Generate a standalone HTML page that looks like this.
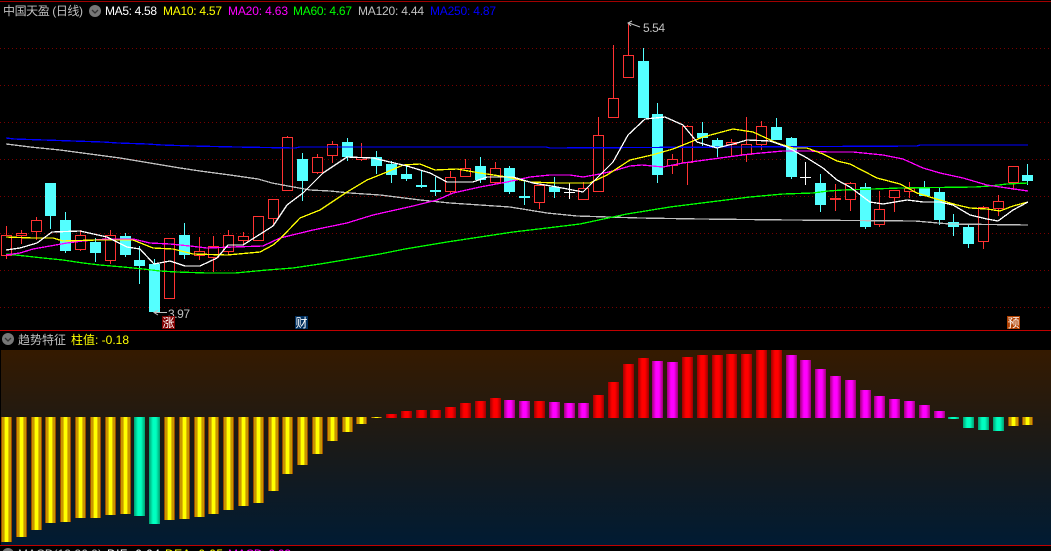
<!DOCTYPE html>
<html><head><meta charset="utf-8"><style>
html,body{margin:0;padding:0;background:#000;width:1051px;height:551px;overflow:hidden}
svg{display:block;font-family:"Liberation Sans","WenQuanYi Zen Hei","Noto Sans CJK SC",sans-serif;font-size:12px}
.k{shape-rendering:crispEdges}
.r{fill:#000;stroke:#ff3232;stroke-width:1;width:10px}
.c{fill:#54ffff;width:11px}
.m{fill:none;shape-rendering:crispEdges;stroke-width:1.3}
.y{fill:url(#gy);width:11px}.d{fill:url(#gr);width:11px}.p{fill:url(#gp);width:11px}.g{fill:url(#gg);width:11px}
</style></head><body>
<svg width="1051" height="551" viewBox="0 0 1051 551" xmlns="http://www.w3.org/2000/svg">
<defs>
<linearGradient id="bg" x1="0" y1="0" x2="0" y2="1"><stop offset="0" stop-color="#351a00"/><stop offset=".5" stop-color="#1a1a18"/><stop offset="1" stop-color="#001b33"/></linearGradient>
<linearGradient id="gy"><stop offset="0" stop-color="#9a4a00"/><stop offset=".09" stop-color="#9a4a00"/><stop offset=".09" stop-color="#c89600"/><stop offset=".27" stop-color="#c89600"/><stop offset=".27" stop-color="#e0c000"/><stop offset=".36" stop-color="#e0c000"/><stop offset=".36" stop-color="#ffff00"/><stop offset=".64" stop-color="#ffff00"/><stop offset=".64" stop-color="#e0c000"/><stop offset=".73" stop-color="#e0c000"/><stop offset=".73" stop-color="#c89600"/><stop offset=".91" stop-color="#c89600"/><stop offset=".91" stop-color="#9a4a00"/><stop offset="1" stop-color="#9a4a00"/></linearGradient>
<linearGradient id="gr"><stop offset="0" stop-color="#a00000"/><stop offset=".36" stop-color="#ff0000"/><stop offset=".64" stop-color="#ff0000"/><stop offset="1" stop-color="#a00000"/></linearGradient>
<linearGradient id="gp"><stop offset="0" stop-color="#a00078"/><stop offset=".36" stop-color="#ff00ff"/><stop offset=".64" stop-color="#ff00ff"/><stop offset="1" stop-color="#a00078"/></linearGradient>
<linearGradient id="gg"><stop offset="0" stop-color="#00a070"/><stop offset=".36" stop-color="#00ffc0"/><stop offset=".64" stop-color="#00ffc0"/><stop offset="1" stop-color="#00a070"/></linearGradient>
</defs>
<rect width="1051" height="551" fill="#000"/>
<path d="M0 1.5H1051" stroke="#a00000" fill="none"/>
<path d="M0 48.5H1051M0 85.5H1051M0 122.5H1051M0 159.5H1051M0 196.5H1051M0 233.5H1051M0 270.5H1051M0 307.5H1051" stroke="#780000" stroke-dasharray="1 3" fill="none"/>

<g>
<path fill="none" stroke="#ff3232" d="M6.5 226V259M21.5 230V244M36.5 217V240M80.5 230V251M110.5 230V264M169.5 238V299M199.5 237V260M213.5 236V272M228.5 230V255M243.5 232V245M258.5 216V241M273.5 199V226M287.5 136V191M317.5 154V174M332.5 141V163M361.5 143V161M450.5 171V194M465.5 159V176M495.5 162V184M539.5 185V209M583.5 182V199M598.5 117V192M613.5 45V118M628.5 23V55M672.5 154V174M687.5 125V185M731.5 139V156M746.5 117V162M761.5 121V150M835.5 184V211M850.5 182V211M879.5 191V227M894.5 190V212M909.5 182V198M983.5 206V249M998.5 195V216M1013.5 166V190"/>
<path fill="none" stroke="#54ffff" d="M50.5 183V229M65.5 212V253M95.5 238V262M125.5 233V257M139.5 246V284M154.5 259V312M184.5 223V259M302.5 153V201M347.5 138V161M376.5 151V174M391.5 161V183M406.5 166V181M421.5 170V188M435.5 177V196M480.5 157V183M509.5 166V194M524.5 180V205M554.5 177V198M643.5 48V118M657.5 103V183M702.5 122V146M717.5 138V157M776.5 118V140M791.5 137V179M820.5 174V212M865.5 183V229M924.5 181V196M939.5 187V225M953.5 214V236M968.5 225V248M1027.5 164V185"/>
<path fill="none" stroke="#fff" d="M569.5 183V199M564 192.5H575M805.5 162V185M800 177.5H811"/>
<rect class="r" x="1.5" y="235.5" height="20"/><rect class="r" x="16.5" y="233.5" height="2"/><rect class="r" x="31.5" y="220.5" height="11"/><rect class="r" x="75.5" y="235.5" height="14"/><rect class="r" x="105.5" y="235.5" height="25"/><rect class="r" x="164.5" y="238.5" height="60"/><rect class="r" x="194.5" y="251.5" height="4"/><rect class="r" x="208.5" y="246.5" height="11"/><rect class="r" x="223.5" y="235.5" height="16"/><rect class="r" x="238.5" y="236.5" height="4"/><rect class="r" x="253.5" y="216.5" height="24"/><rect class="r" x="268.5" y="199.5" height="19"/><rect class="r" x="282.5" y="137.5" height="53"/><rect class="r" x="312.5" y="157.5" height="15"/><rect class="r" x="327.5" y="144.5" height="11"/><rect class="r" x="356.5" y="157.5" height="2"/><rect class="r" x="445.5" y="177.5" height="14"/><rect class="r" x="460.5" y="168.5" height="8"/><rect class="r" x="490.5" y="168.5" height="14"/><rect class="r" x="534.5" y="185.5" height="17"/><rect class="r" x="578.5" y="188.5" height="11"/><rect class="r" x="593.5" y="135.5" height="56"/><rect class="r" x="608.5" y="98.5" height="19"/><rect class="r" x="623.5" y="55.5" height="22"/><rect class="r" x="667.5" y="159.5" height="6"/><rect class="r" x="682.5" y="126.5" height="36"/><rect class="r" x="726.5" y="142.5" height="2"/><rect class="r" x="741.5" y="144.5" height="10"/><rect class="r" x="756.5" y="126.5" height="18"/><rect x="830" y="198" width="11" height="2" fill="#ff3232"/><rect class="r" x="845.5" y="183.5" height="16"/><rect class="r" x="874.5" y="209.5" height="15"/><rect class="r" x="889.5" y="190.5" height="7"/><rect class="r" x="904.5" y="188.5" height="3"/><rect class="r" x="978.5" y="207.5" height="34"/><rect class="r" x="993.5" y="201.5" height="7"/><rect class="r" x="1008.5" y="166.5" height="16"/>
<rect class="c" x="45" y="183" height="33"/><rect class="c" x="60" y="220" height="31"/><rect class="c" x="90" y="242" height="11"/><rect class="c" x="120" y="236" height="19"/><rect class="c" x="134" y="260" height="6"/><rect class="c" x="149" y="264" height="48"/><rect class="c" x="179" y="235" height="20"/><rect class="c" x="297" y="159" height="22"/><rect class="c" x="342" y="142" height="15"/><rect class="c" x="371" y="157" height="9"/><rect class="c" x="386" y="164" height="11"/><rect class="c" x="401" y="174" height="5"/><rect class="c" x="416" y="185" height="2"/><rect class="c" x="430" y="190" height="2"/><rect class="c" x="475" y="166" height="14"/><rect class="c" x="504" y="168" height="24"/><rect class="c" x="519" y="196" height="2"/><rect class="c" x="549" y="187" height="5"/><rect class="c" x="638" y="61" height="57"/><rect class="c" x="652" y="114" height="61"/><rect class="c" x="697" y="133" height="5"/><rect class="c" x="712" y="140" height="7"/><rect class="c" x="771" y="127" height="13"/><rect class="c" x="786" y="138" height="39"/><rect class="c" x="815" y="183" height="22"/><rect class="c" x="860" y="187" height="40"/><rect class="c" x="919" y="187" height="9"/><rect class="c" x="934" y="192" height="28"/><rect class="c" x="948" y="222" height="5"/><rect class="c" x="963" y="227" height="17"/><rect class="c" x="1022" y="175" height="6"/>
</g>

<polyline class="m" stroke="#c0c0c0" points="6,144 30,147 60,150 90,154 120,158 150,163 180,168 200,171 230,175 258,179 272,183 288,186 310,190 330,191 350,193 380,195 420,200 450,203 480,205 510,207 547,213 577,216 640,218 700,219 790,220 915,221 950,224 1028,225"/>
<polyline class="m" stroke="#0000ff" points="6,138 14,139 44,140 73,141 103,142 118,143 147,144 162,145 192,146 236,147 295,148 300,147 546,147 550,148 917,146 920,145 1028,145"/>
<polyline class="m" stroke="#00ff00" points="6,254 25,256 43,258 63,260 83,263 100,265 123,267 143,269 160,271 177,272 207,273 235,273 267,270 293,268 320,264 350,259 380,254 405,249 447,242 480,237 513,232 547,228 580,224 627,214 670,207 710,202 750,197 783,194 813,193 828,191 843,190 873,189 900,188 975,187 990,186 1007,184 1028,183"/>
<polyline class="m" stroke="#ff00ff" points="6,255 20,253 33,249 50,246 67,243 83,241 107,239 133,239 150,243 170,244 190,246 207,248 233,247 263,246 280,238 313,230 347,223 373,215 413,206 437,200 453,193 480,187 507,182 530,177 550,175 570,175 583,177 600,174 613,171 630,166 642,165 663,167 683,163 720,158 750,154 783,151 810,151 828,152 853,152 883,155 903,159 923,168 940,173 963,178 987,185 1007,188 1028,191"/>
<polyline class="m" stroke="#ffff00" points="6,237 33,238 53,238 63,241 97,240 133,240 153,248 173,249 193,254 227,255 260,252 273,245 280,239 300,218 320,210 347,192 367,180 387,172 403,165 420,164 435,170 457,169 480,173 507,177 530,182 557,183 590,183 607,175 630,160 652,155 673,149 703,137 733,129 753,132 777,143 793,148 807,148 823,154 837,161 850,164 877,178 900,184 917,193 933,198 957,205 970,208 987,209 1000,211 1013,206 1028,202"/>
<polyline class="m" stroke="#ffffff" points="6,250 20,248 37,243 52,232 80,231 107,237 127,247 140,249 154,264 170,261 185,266 200,266 217,258 228,245 243,245 273,226 287,205 303,193 323,173 347,157 373,158 390,162 407,166 430,173 447,182 473,182 487,177 513,177 533,183 557,187 583,192 600,175 613,162 628,135 645,119 665,117 683,125 697,142 717,148 737,143 747,140 770,141 787,147 807,158 823,168 837,180 850,187 870,202 883,204 907,200 923,202 940,202 953,205 970,215 987,219 998,221 1013,210 1028,202"/>

<circle cx="95" cy="11" r="6" fill="#777"/><path d="M92 10l3 3 3-3" stroke="#333" fill="none" stroke-width="1.3"/>
<text x="3" y="15" fill="#c0c0c0" textLength="80">中国天盈 (日线)</text>
<text x="105" y="15" fill="#fff" textLength="52">MA5: 4.58</text>
<text x="163" y="15" fill="#ff0" textLength="59">MA10: 4.57</text>
<text x="228" y="15" fill="#f0f" textLength="60">MA20: 4.63</text>
<text x="293" y="15" fill="#0f0" textLength="59">MA60: 4.67</text>
<text x="358" y="15" fill="#c0c0c0" textLength="66">MA120: 4.44</text>
<text x="430" y="15" fill="#0000ff" textLength="66">MA250: 4.87</text>

<text x="643" y="32" fill="#c0c0c0" textLength="22">5.54</text>
<path d="M640 27L629 23M632 21L628 23L631 26" stroke="#c0c0c0" fill="none"/>
<text x="168" y="318" fill="#c0c0c0" textLength="22">3.97</text>
<path d="M167 312.5H155M158 310L154 312.5L158 315" stroke="#c0c0c0" fill="none"/>

<rect x="162" y="316" width="13" height="13" fill="#800000"/><text x="162.5" y="327" fill="#fff" font-size="12" textLength="12">涨</text>
<rect x="295" y="316" width="13" height="13" fill="#003060"/><text x="295.5" y="327" fill="#fff" font-size="12" textLength="12">财</text>
<rect x="1007" y="316" width="13" height="13" fill="#b04000"/><text x="1007.5" y="327" fill="#fff" font-size="12" textLength="12">预</text>

<path d="M0 330.5H1051" stroke="#c00000" fill="none"/>
<circle cx="8" cy="339" r="6" fill="#777"/><path d="M5 338l3 3 3-3" stroke="#333" fill="none" stroke-width="1.3"/>
<text x="18" y="344" fill="#c0c0c0" textLength="48">趋势特征</text>
<text x="71" y="344" fill="#ff0" textLength="58">柱值: -0.18</text>

<rect x="1" y="350" width="1050" height="195" fill="url(#bg)"/>
<g class="k">
<rect class="y" x="1" y="417" height="125"/><rect class="y" x="16" y="417" height="120"/><rect class="y" x="31" y="417" height="113"/><rect class="y" x="45" y="417" height="106"/><rect class="y" x="60" y="417" height="105"/><rect class="y" x="75" y="417" height="101"/><rect class="y" x="90" y="417" height="101"/><rect class="y" x="105" y="417" height="98"/><rect class="y" x="120" y="417" height="97"/><rect class="g" x="134" y="417" height="99"/><rect class="g" x="149" y="417" height="107"/><rect class="y" x="164" y="417" height="103"/><rect class="y" x="179" y="417" height="102"/><rect class="y" x="194" y="417" height="100"/><rect class="y" x="208" y="417" height="97"/><rect class="y" x="223" y="417" height="93"/><rect class="y" x="238" y="417" height="89"/><rect class="y" x="253" y="417" height="86"/><rect class="y" x="268" y="417" height="74"/><rect class="y" x="282" y="417" height="57"/><rect class="y" x="297" y="417" height="48"/><rect class="y" x="312" y="417" height="37"/><rect class="y" x="327" y="417" height="24"/><rect class="y" x="342" y="417" height="15"/><rect class="y" x="356" y="417" height="7"/><rect class="y" x="371" y="417" height="1"/>
<rect class="d" x="386" y="414" height="4"/><rect class="d" x="401" y="411" height="7"/><rect class="d" x="416" y="410" height="8"/><rect class="d" x="430" y="410" height="8"/><rect class="d" x="445" y="407" height="11"/><rect class="d" x="460" y="403" height="15"/><rect class="d" x="475" y="401" height="17"/><rect class="d" x="490" y="398" height="20"/><rect class="p" x="504" y="400" height="18"/><rect class="p" x="519" y="401" height="17"/><rect class="d" x="534" y="401" height="17"/><rect class="p" x="549" y="402" height="16"/><rect class="p" x="564" y="403" height="15"/><rect class="p" x="578" y="403" height="15"/><rect class="d" x="593" y="395" height="23"/><rect class="d" x="608" y="382" height="36"/><rect class="d" x="623" y="364" height="54"/><rect class="d" x="638" y="358" height="60"/><rect class="p" x="652" y="361" height="57"/><rect class="p" x="667" y="362" height="56"/><rect class="d" x="682" y="357" height="61"/><rect class="d" x="697" y="355" height="63"/><rect class="d" x="712" y="355" height="63"/><rect class="d" x="726" y="354" height="64"/><rect class="d" x="741" y="354" height="64"/><rect class="d" x="756" y="350" height="68"/><rect class="d" x="771" y="350" height="68"/><rect class="p" x="786" y="355" height="63"/><rect class="p" x="800" y="360" height="58"/><rect class="p" x="815" y="369" height="49"/><rect class="p" x="830" y="376" height="42"/><rect class="p" x="845" y="380" height="38"/><rect class="p" x="860" y="390" height="28"/><rect class="p" x="874" y="396" height="22"/><rect class="p" x="889" y="399" height="19"/><rect class="p" x="904" y="401" height="17"/><rect class="p" x="919" y="405" height="13"/><rect class="p" x="934" y="411" height="7"/>
<rect class="g" x="948" y="417" height="2"/><rect class="g" x="963" y="417" height="11"/><rect class="g" x="978" y="417" height="13"/><rect class="g" x="993" y="417" height="14"/><rect class="y" x="1008" y="417" height="9"/><rect class="y" x="1022" y="417" height="8"/>
</g>
<path d="M0 545.5H1051" stroke="#c00000" fill="none"/>
<circle cx="8" cy="554" r="6" fill="#777"/>
<text x="18" y="558" fill="#c0c0c0" textLength="84">MACD(12,26,9)</text>
<text x="107" y="558" fill="#fff" textLength="53">DIF: 0.04</text>
<text x="165" y="558" fill="#ff0" textLength="58">DEA: 0.05</text>
<text x="228" y="558" fill="#f0f" textLength="63">MACD: 0.03</text>
</svg>
</body></html>
